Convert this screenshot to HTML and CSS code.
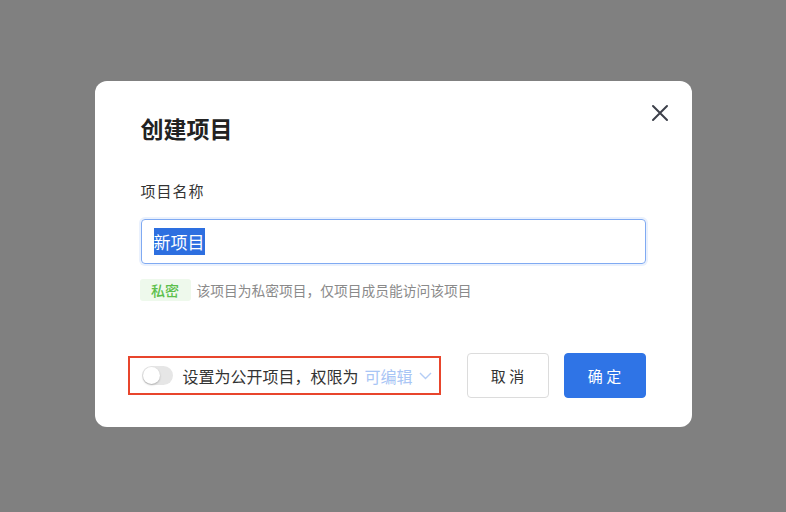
FILE: index.html
```html
<!DOCTYPE html>
<html lang="zh">
<head>
<meta charset="utf-8">
<link rel="stylesheet" href="styles.css">
</head>
<body>
<div class="overlay">
  <div class="dialog">
    <button class="close" aria-label="关闭">
      <svg width="18" height="18" viewBox="0 0 18 18"><path d="M2 2L16 16M16 2L2 16" stroke="#3d404a" stroke-width="2" fill="none" stroke-linecap="round"/></svg>
    </button>
    <h1 class="title">创建项目</h1>
    <div class="label">项目名称</div>
    <div class="input"><span class="sel">新项目</span></div>
    <div class="hint"><span class="badge">私密</span><span class="hint-text">该项目为私密项目，仅项目成员能访问该项目</span></div>
    <div class="footer">
      <div class="public">
        <span class="switch"><span class="knob"></span></span>
        <span class="public-text">设置为公开项目，权限为</span>
        <span class="perm">可编辑</span>
        <svg class="chev" width="13" height="8" viewBox="0 0 13 8"><path d="M1 1L6.5 6.5L12 1" stroke="#b4cdf5" stroke-width="1.4" fill="none"/></svg>
      </div>
      <div class="actions">
        <button class="btn btn-cancel">取 消</button>
        <button class="btn btn-ok">确 定</button>
      </div>
    </div>
  </div>
</div>
</body>
</html>
```
FILE: styles.css
```css
html, body {
  margin: 0;
  padding: 0;
}
body {
  background: #808080;
  font-family: "Noto Sans CJK SC", "Noto Sans", sans-serif;
  width: 786px;
  height: 512px;
  overflow: hidden;
}
.overlay {
  display: flex;
  justify-content: center;
  padding-top: 81px;
}
.dialog {
  position: relative;
  width: 597px;
  box-sizing: border-box;
  background: #fff;
  border-radius: 12px;
  padding: 32px 46px 29px 46px;
}
.close {
  position: absolute;
  top: 23px;
  right: 23px;
  width: 18px;
  height: 18px;
  padding: 0;
  border: 0;
  background: none;
  display: flex;
}
.title {
  margin: 0;
  font-size: 23px;
  line-height: 30px;
  font-weight: 700;
  color: #222;
}
.label {
  margin-top: 38px;
  font-size: 15px;
  letter-spacing: 1px;
  line-height: 20px;
  color: #333;
}
.input {
  margin-top: 18px;
  height: 45px;
  box-sizing: border-box;
  border: 1px solid #80aaf2;
  border-radius: 4px;
  box-shadow: 0 0 0 2px rgba(80, 140, 240, 0.12);
  display: flex;
  align-items: center;
  padding-left: 12px;
}
.sel {
  background: #2d6fe0;
  color: #fff;
  font-size: 17px;
  line-height: 27px;
}
.hint {
  margin-top: 15px;
  display: flex;
  align-items: center;
  height: 22px;
}
.badge {
  width: 51px;
  height: 22px;
  line-height: 22px;
  text-align: center;
  background: #eef9ec;
  color: #5cbf4c;
  font-size: 14px;
  font-weight: 500;
  border-radius: 3px;
  margin-left: -1px;
}
.hint-text {
  margin-left: 6px;
  font-size: 13.75px;
  color: #8a8a8a;
}
.footer {
  margin-top: 52px;
  display: flex;
  align-items: center;
  justify-content: space-between;
  height: 45px;
}
.public {
  margin-left: -13px;
  width: 313px;
  height: 39px;
  box-sizing: border-box;
  border: 2px solid #e8452c;
  display: flex;
  align-items: center;
  padding-left: 12px;
}
.switch {
  width: 31px;
  height: 19px;
  border-radius: 10px;
  background: #e6e6e6;
  position: relative;
  flex: none;
}
.knob {
  position: absolute;
  left: 1px;
  top: 1px;
  width: 17px;
  height: 17px;
  border-radius: 50%;
  background: #fff;
  box-shadow: 0 1px 2px rgba(0, 0, 0, 0.25);
}
.public-text {
  margin-left: 10px;
  font-size: 16px;
  color: #333;
}
.perm {
  margin-left: 6px;
  font-size: 16px;
  color: #a8c5f5;
}
.chev {
  margin-left: 6px;
}
.actions {
  display: flex;
  gap: 15px;
}
.btn {
  width: 82px;
  height: 45px;
  border-radius: 4px;
  font-family: inherit;
  font-size: 15px;
  cursor: pointer;
}
.btn-cancel {
  background: #fff;
  border: 1px solid #dcdcdc;
  color: #333;
}
.btn-ok {
  background: #2f74e6;
  border: 1px solid #2f74e6;
  color: #fff;
}
```
